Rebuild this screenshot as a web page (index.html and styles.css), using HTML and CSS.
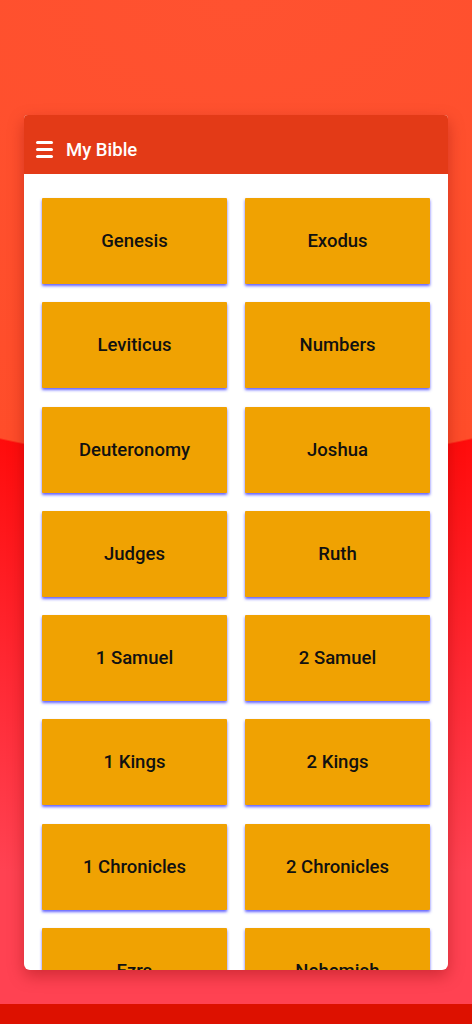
FILE: index.html
```html
<!DOCTYPE html>
<html lang="en">
<head>
  <meta charset="UTF-8" />
  <meta name="viewport" content="width=device-width, initial-scale=1.0"/>
  <title>My Bible</title>
  <link rel="stylesheet" href="styles.css">
</head>
<body>

  <div class="card">
    <div class="header">
      <span class="menu-icon"><span></span><span></span><span></span></span>
      <span class="title">My Bible</span>
    </div>

    <div class="book-grid">
      <div class="book">Genesis</div>
      <div class="book">Exodus</div>
      <div class="book">Leviticus</div>
      <div class="book">Numbers</div>
      <div class="book">Deuteronomy</div>
      <div class="book">Joshua</div>
      <div class="book">Judges</div>
      <div class="book">Ruth</div>
      <div class="book">1 Samuel</div>
      <div class="book">2 Samuel</div>
      <div class="book">1 Kings</div>
      <div class="book">2 Kings</div>
      <div class="book">1 Chronicles</div>
      <div class="book">2 Chronicles</div>
      <div class="book">Ezra</div>
      <div class="book">Nehemiah</div>
    </div>
  </div>

  <div class="bottom-bar"></div>

</body>
</html>
```

FILE: styles.css
```css
html, body {
  margin: 0;
  padding: 0;
}

body {
  width: 472px;
  height: 1024px;
  overflow: hidden;
  display: flex;
  flex-direction: column;
  font-family: "Roboto", "Liberation Sans", sans-serif;
  background:
    radial-gradient(ellipse 725px 465px at 50% 0, #ff5230 0, #ff4d2a 99.6%, #ff0c0c 100%, #ff2a35 150%, #ff4252 190%);
}

.card {
  margin: 115px 24px 0;
  height: 855px;
  background-color: white;
  border-radius: 4px 4px 6px 6px;
  overflow: hidden;
  box-shadow: 0 6px 16px rgba(120, 0, 0, 0.35);
  display: flex;
  flex-direction: column;
}

.header {
  box-sizing: border-box;
  height: 59px;
  flex-shrink: 0;
  background-color: #e33a17;
  display: flex;
  align-items: center;
  padding: 10px 0 0 12px;
  gap: 13px;
  color: white;
}

.menu-icon {
  width: 17px;
  display: flex;
  flex-direction: column;
  gap: 4px;
}

.menu-icon span {
  display: block;
  height: 3px;
  border-radius: 2px;
  background-color: white;
}

.title {
  font-size: 18.5px;
  font-weight: 500;
}

.book-grid {
  display: grid;
  grid-template-columns: 1fr 1fr;
  grid-auto-rows: 86px;
  column-gap: 18px;
  row-gap: 18.3px;
  padding: 24px 18px;
}

.book {
  background-color: #f0a202;
  display: flex;
  align-items: center;
  justify-content: center;
  font-size: 18.5px;
  font-weight: 500;
  color: #111;
  border-radius: 1px;
  box-shadow: 0 2px 3px rgba(70, 70, 255, 0.85);
}

.bottom-bar {
  margin-top: auto;
  height: 20px;
  background-color: #dd1100;
}
```
